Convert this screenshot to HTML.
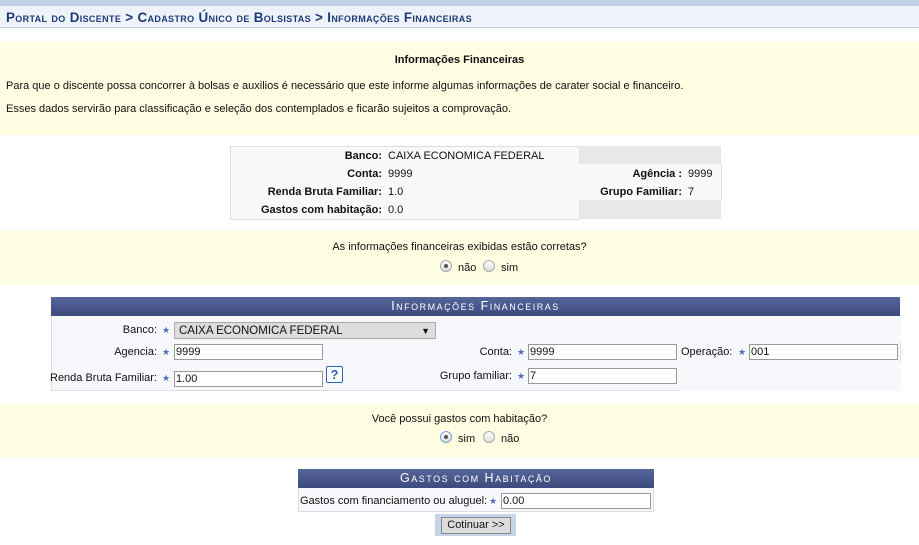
<!DOCTYPE html><html><head><meta charset="utf-8"><style>
body{margin:0;width:919px;height:545px;position:relative;background:#fff;font-family:"Liberation Sans",sans-serif;font-size:11px;color:#111;overflow:hidden}
.a{position:absolute;white-space:nowrap}
.y{position:absolute;left:0;width:919px;background:#fefee3}
.sc{font-variant:small-caps}
.st{color:#4a6cc4;font-size:9px}
.in{position:absolute;height:14px;border:1px solid #999;background:#fff;font-size:11px;line-height:14px;padding-left:1px;box-sizing:content-box}
.r{position:absolute;width:10px;height:10px;border-radius:50%;border:1px solid #aaa;background:linear-gradient(#fff,#ddd)}
.r.on::after{content:"";position:absolute;left:3px;top:3px;width:4px;height:4px;border-radius:50%;background:#555}
.hd{position:absolute;background:linear-gradient(#56659a,#3c4a7e);color:#fff;text-align:center;font-variant:small-caps;letter-spacing:1.5px;font-size:12.5px;line-height:19px}
.rt{text-align:right}
</style></head><body>
<div class="a" style="left:0;top:0;width:919px;height:6px;background:#c4d0e8"></div>
<div class="a" style="left:0;top:6px;width:919px;height:21px;background:#eef2fa;border-bottom:1px solid #c6d0e2"></div>
<div class="a sc" style="left:6px;top:10px;font-weight:bold;font-size:13.4px;letter-spacing:0.35px;color:#1d3a78">Portal do Discente &gt; Cadastro Único de Bolsistas &gt; Informações Financeiras</div>

<div class="y" style="top:42px;height:93px"></div>
<div class="a" style="left:0;width:919px;top:54px;text-align:center;font-weight:bold">Informações Financeiras</div>
<div class="a" style="left:6px;top:80px">Para que o discente possa concorrer à bolsas e auxilios é necessário que este informe algumas informações de carater social e financeiro.</div>
<div class="a" style="left:6px;top:103px">Esses dados servirão para classificação e seleção dos contemplados e ficarão sujeitos a comprovação.</div>

<div class="a" style="left:230px;top:146px;width:348px;height:72px;background:#f8f9fb;border:1px solid #ddd"></div>
<div class="a" style="left:579px;top:146px;width:142px;height:18px;background:#e8e8e8"></div>
<div class="a" style="left:579px;top:164px;width:142px;height:36px;background:#f8f9fb;border-right:1px solid #ddd"></div>
<div class="a" style="left:579px;top:200px;width:142px;height:19px;background:#e8e8e8"></div>
<div class="a rt" style="left:230px;width:152px;top:150px;font-weight:bold">Banco:</div><div class="a" style="left:388px;top:150px">CAIXA ECONOMICA FEDERAL</div>
<div class="a rt" style="left:230px;width:152px;top:168px;font-weight:bold">Conta:</div><div class="a" style="left:388px;top:168px">9999</div>
<div class="a rt" style="left:230px;width:152px;top:186px;font-weight:bold">Renda Bruta Familiar:</div><div class="a" style="left:388px;top:186px">1.0</div>
<div class="a rt" style="left:230px;width:152px;top:204px;font-weight:bold">Gastos com habitação:</div><div class="a" style="left:388px;top:204px">0.0</div>
<div class="a rt" style="left:560px;width:122px;top:168px;font-weight:bold">Agência :</div><div class="a" style="left:688px;top:168px">9999</div>
<div class="a rt" style="left:560px;width:122px;top:186px;font-weight:bold">Grupo Familiar:</div><div class="a" style="left:688px;top:186px">7</div>

<div class="y" style="top:231px;height:54px"></div>
<div class="a" style="left:0;width:919px;top:241px;text-align:center">As informações financeiras exibidas estão corretas?</div>
<div class="r on" style="left:440px;top:260px"></div><div class="a" style="left:458px;top:262px">não</div>
<div class="r" style="left:483px;top:260px"></div><div class="a" style="left:501px;top:262px">sim</div>

<div class="hd" style="left:51px;top:297px;width:849px;height:19px">Informações Financeiras</div>
<div class="a" style="left:51px;top:316px;width:849px;height:75px;background:#f7f8fb;border-left:1px solid #ddd"></div>
<div class="a" style="left:51px;top:390px;width:628px;height:1px;background:#ddd"></div>
<div class="a" style="left:900px;top:342px;width:1px;height:20px;background:#ddd"></div>
<div class="a rt" style="left:0;width:157px;top:324px">Banco:</div><div class="a st" style="left:162px;top:325px">★</div>
<div class="a" style="left:174px;top:322px;width:262px;background:#ddd;border:1px solid #aaa;line-height:16px;font-size:11.5px;padding-left:4px;box-sizing:border-box;height:17px">CAIXA ECONOMICA FEDERAL<span style="position:absolute;right:5px;font-size:9px">▼</span></div>
<div class="a rt" style="left:0;width:157px;top:346px">Agencia:</div><div class="a st" style="left:162px;top:347px">★</div>
<div class="in" style="left:174px;top:344px;width:146px">9999</div>
<div class="a rt" style="left:0;width:157px;top:372px">Renda Bruta Familiar:</div><div class="a st" style="left:162px;top:373px">★</div>
<div class="in" style="left:174px;top:371px;width:146px">1.00</div>
<div class="a" style="left:326px;top:366px;width:15px;height:15px;border:1px solid #2a66b8;border-radius:2px;background:#fff;color:#2a66b8;font-weight:bold;font-size:13px;text-align:center;line-height:15px">?</div>
<div class="a rt" style="left:400px;width:112px;top:346px">Conta:</div><div class="a st" style="left:517px;top:347px">★</div>
<div class="in" style="left:528px;top:344px;width:146px">9999</div>
<div class="a rt" style="left:400px;width:112px;top:370px">Grupo familiar:</div><div class="a st" style="left:517px;top:371px">★</div>
<div class="in" style="left:528px;top:368px;width:146px">7</div>
<div class="a" style="left:681px;top:346px">Operação:</div><div class="a st" style="left:738px;top:347px">★</div>
<div class="in" style="left:749px;top:344px;width:146px">001</div>

<div class="y" style="top:404px;height:53px"></div>
<div class="a" style="left:0;width:919px;top:413px;text-align:center">Você possui gastos com habitação?</div>
<div class="r on" style="left:440px;top:431px;border-color:#7aa0d0"></div><div class="a" style="left:458px;top:433px">sim</div>
<div class="r" style="left:483px;top:431px"></div><div class="a" style="left:501px;top:433px">não</div>

<div class="hd" style="left:298px;top:469px;width:356px;height:19px">Gastos com Habitação</div>
<div class="a" style="left:298px;top:488px;width:354px;height:23px;background:#f7f8fb;border:1px solid #ddd;border-top:0"></div>
<div class="a" style="left:300px;top:495px">Gastos com financiamento ou aluguel:</div><div class="a st" style="left:489px;top:496px">★</div>
<div class="in" style="left:501px;top:493px;width:147px">0.00</div>
<div class="a" style="left:435px;top:514px;width:81px;height:22px;background:#c7d3e9"></div>
<div class="a" style="left:441px;top:517px;width:68px;height:15px;background:#ddd;border:1px solid #888;text-align:center;line-height:15px">Cotinuar &gt;&gt;</div>
</body></html>
